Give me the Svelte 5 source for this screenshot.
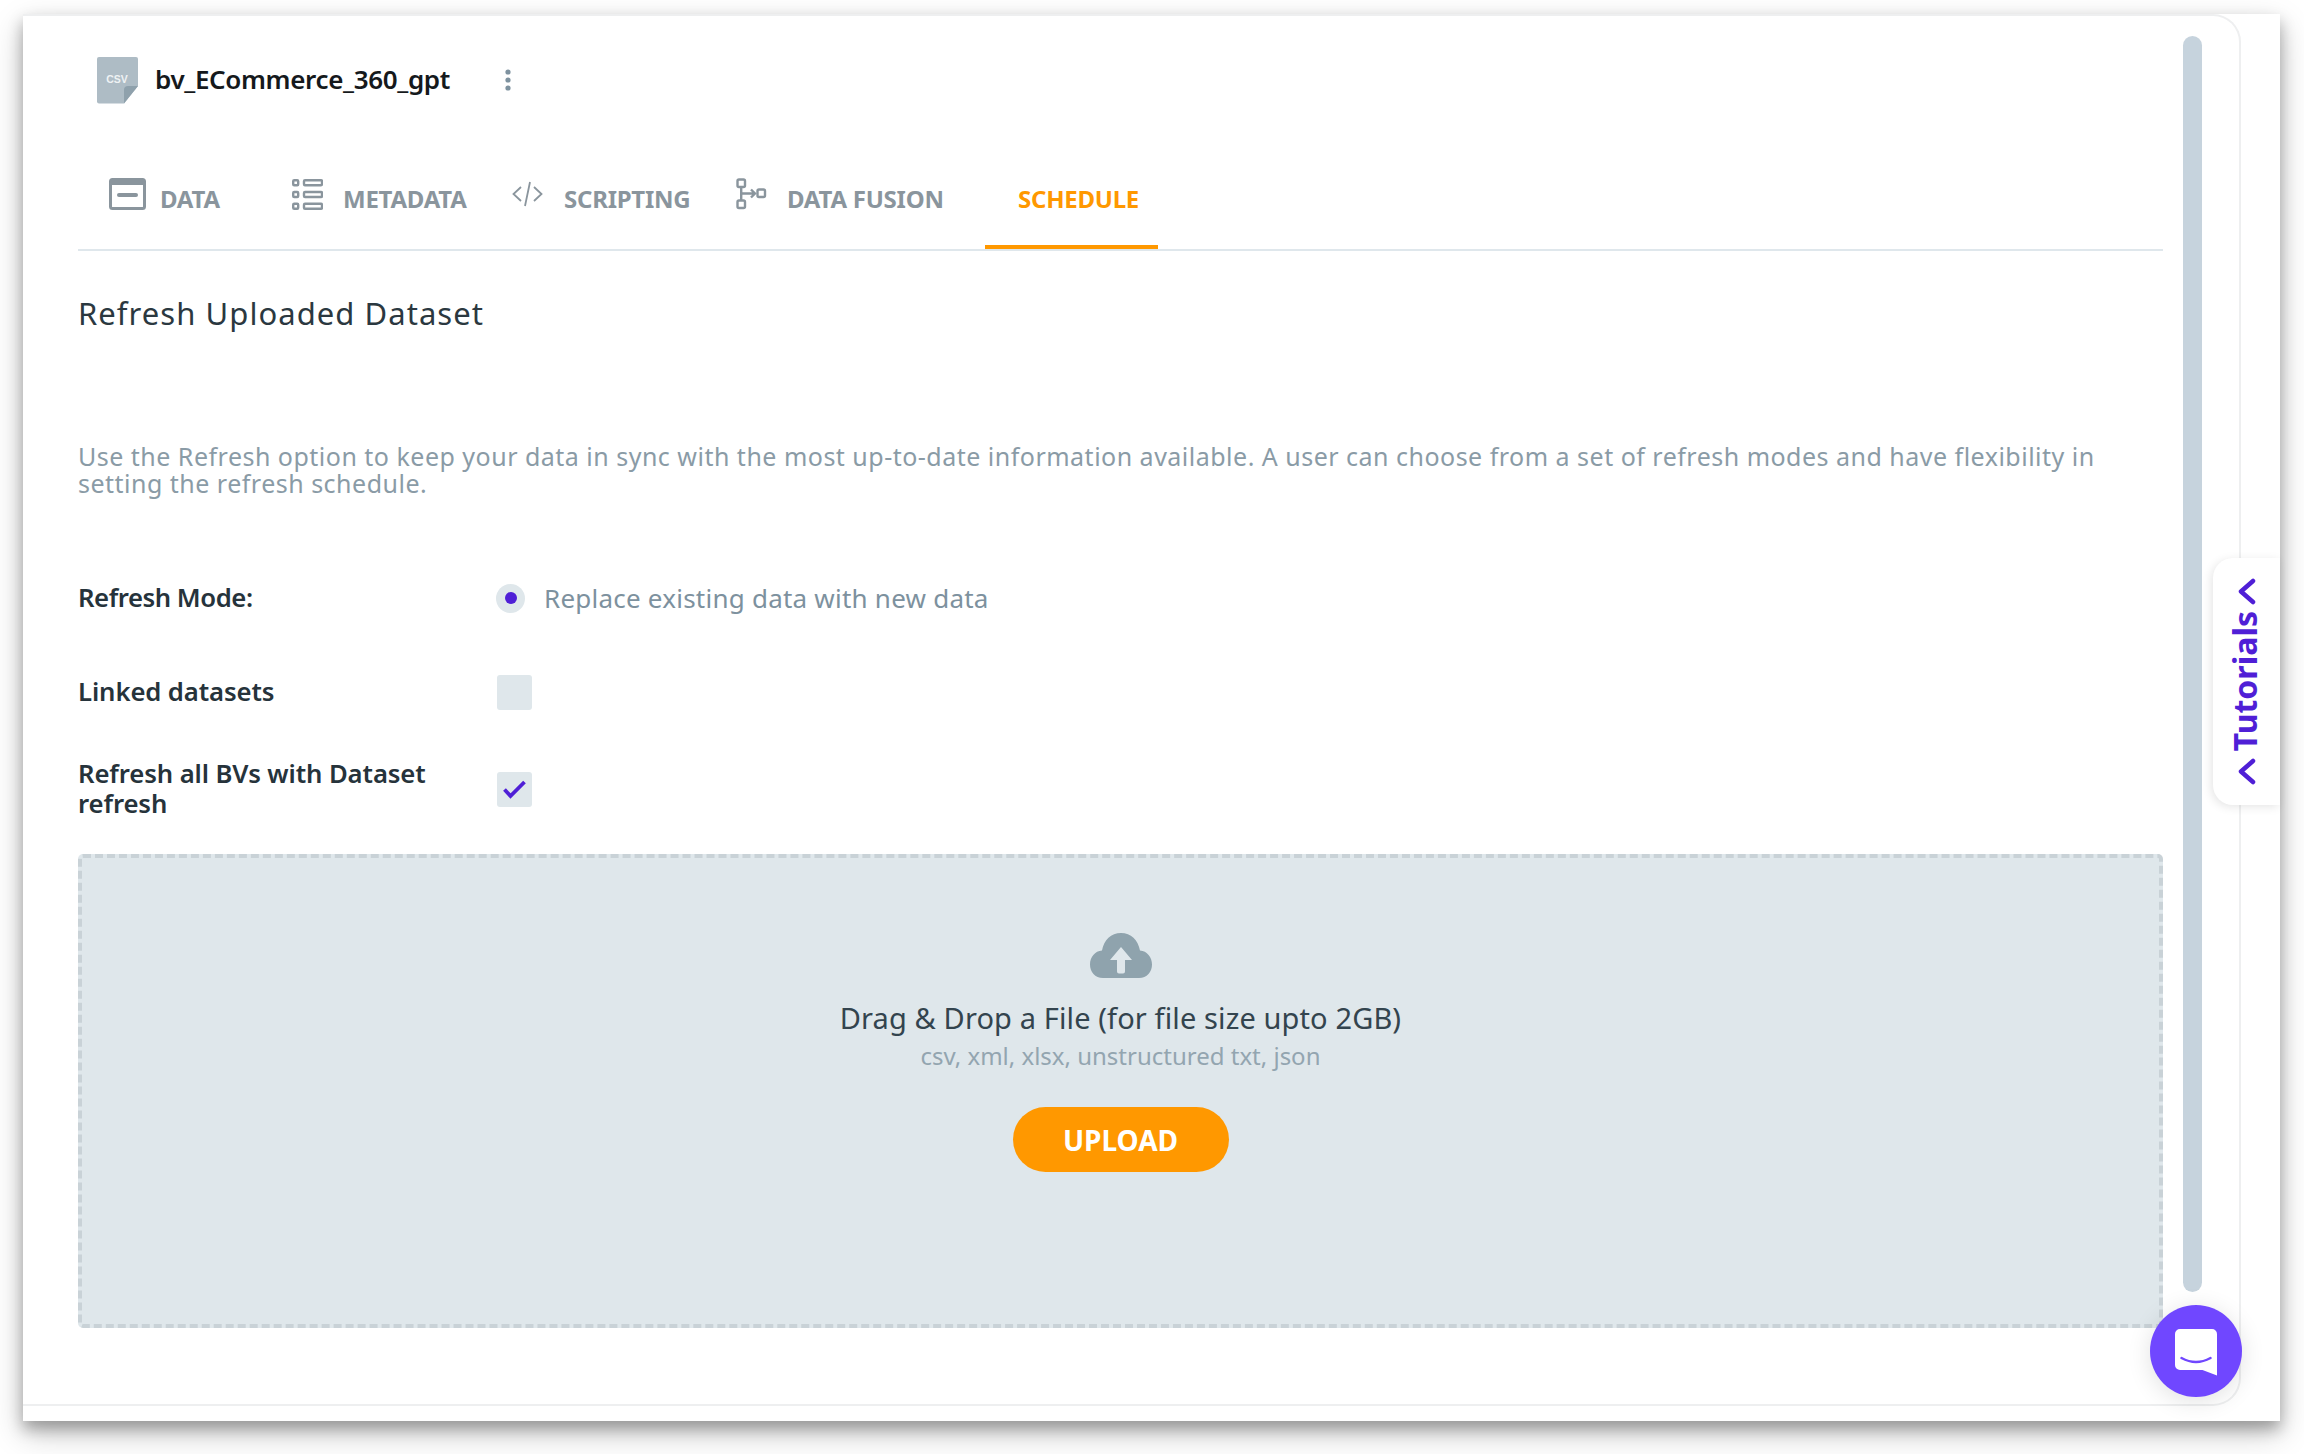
<script>
  const tabs = [
    { label: 'DATA', icon: 'data' },
    { label: 'METADATA', icon: 'meta' },
    { label: 'SCRIPTING', icon: 'code' },
    { label: 'DATA FUSION', icon: 'fusion' },
    { label: 'SCHEDULE', icon: 'sched', active: true }
  ];
</script>

<div class="page">
  <div class="window">
    <div class="panel">
      <main class="content">
        <header class="title-row">
          <svg class="csv" width="41" height="47" viewBox="0 0 41 47">
            <path d="M2 0H39a2 2 0 0 1 2 2V29L27 46.500H2a2 2 0 0 1-2-2V2a2 2 0 0 1 2-2Z" fill="#aebcc5" />
            <path d="M41 29 27 46.500V33a4 4 0 0 1 4-4Z" fill="#8fa1ac" />
            <text x="20" y="26" text-anchor="middle" class="csv-text">CSV</text>
          </svg>
          <h1>bv_ECommerce_360_gpt</h1>
          <svg class="kebab" width="8" height="24" viewBox="0 0 8 24" fill="#7e929f">
            <circle cx="4" cy="4" r="2.600" /><circle cx="4" cy="12" r="2.600" /><circle cx="4" cy="20" r="2.600" />
          </svg>
        </header>

        <nav class="tabs">
          {#each tabs as t}
            <div class="tab {t.icon}" class:active={t.active}>
              {#if t.icon === 'data'}
                <svg width="37" height="32" viewBox="0 0 37 32">
                  <rect x="1.500" y="1.500" width="34" height="29" rx="2" fill="none" stroke="#8a959d" stroke-width="3" />
                  <rect x="1" y="1" width="35" height="6" fill="#8a959d" />
                  <rect x="8" y="15" width="21" height="4" rx="2" fill="#8a959d" />
                </svg>
              {:else if t.icon === 'meta'}
                <svg width="31" height="31" viewBox="0 0 31 31" fill="none" stroke="#8a959d" stroke-width="2.400">
                  <rect x="1.200" y="1.200" width="5" height="5" rx="1" /><rect x="12" y="1.200" width="18" height="5" rx="1" />
                  <rect x="1.200" y="13" width="5" height="5" rx="1" /><rect x="12" y="13" width="18" height="5" rx="1" />
                  <rect x="1.200" y="24.800" width="5" height="5" rx="1" /><rect x="12" y="24.800" width="18" height="5" rx="1" />
                </svg>
              {:else if t.icon === 'code'}
                <svg width="31" height="26" viewBox="0 0 31 26" fill="none" stroke="#8a959d" stroke-width="1.800">
                  <path d="M9 6 1.500 13 9 20M22 6l7.500 7L22 20M18 1 13 25" />
                </svg>
              {:else if t.icon === 'fusion'}
                <svg width="31" height="32" viewBox="0 0 31 32" fill="none" stroke="#8a959d" stroke-width="2.400">
                  <rect x="1.500" y="1.500" width="7.500" height="7.500" rx="1.500" /><rect x="1.500" y="22.500" width="7.500" height="7.500" rx="1.500" /><rect x="21.500" y="11.500" width="7.500" height="7.500" rx="1.500" />
                  <path d="M5.200 9V22.500M5.200 15.500H19M15 11.500l4 4-4 4" />
                </svg>
              {/if}
              <span>{t.label}</span>
            </div>
          {/each}
        </nav>

        <h2>Refresh Uploaded Dataset</h2>
        <p class="intro">Use the Refresh option to keep your data in sync with the most up-to-date information available. A user can choose from a set of refresh modes and have flexibility in setting the refresh schedule.</p>

        <div class="field mode">
          <div class="label">Refresh Mode:</div>
          <div class="radio"><i></i></div>
          <span class="radio-text">Replace existing data with new data</span>
        </div>
        <div class="field linked">
          <div class="label">Linked datasets</div>
          <div class="check"></div>
        </div>
        <div class="field all">
          <div class="label">Refresh all BVs with Dataset refresh</div>
          <div class="check">
            <svg width="23" height="19" viewBox="0 0 23 19" fill="none" stroke="#4f1fd6" stroke-width="3.800"><path d="M1.500 9.500l6 6.500L21.500 2" /></svg>
          </div>
        </div>

        <section class="drop">
          <svg class="cloud" width="62" height="45" viewBox="0 0 62 45">
            <path d="M13 45C5 45 0 39 0 31.500 0 24 5 18 12 17.500 14 7 21 0 31 0s17 7 19 17.500C57 18 62 24 62 31.500 62 39 57 45 49 45Z" fill="#8fa3ad" />
            <path d="M31 14 42 27H35V38.500a2 2 0 0 1-2 2H29a2 2 0 0 1-2-2V27H20Z" fill="#dfe7eb" />
          </svg>
          <div class="drop-title">Drag &amp; Drop a File (for file size upto 2GB)</div>
          <div class="drop-sub">csv, xml, xlsx, unstructured txt, json</div>
          <button class="upload">UPLOAD</button>
        </section>
      </main>
      <div class="scrollbar"></div>
    </div>

    <aside class="tutorials">
      <svg width="20" height="27" viewBox="0 0 20 27" fill="none" stroke="#4f1fd6" stroke-width="4.500" stroke-linecap="round" stroke-linejoin="round"><path d="M16 3 4 13.500 16 24" /></svg>
      <span>Tutorials</span>
      <svg width="20" height="27" viewBox="0 0 20 27" fill="none" stroke="#4f1fd6" stroke-width="4.500" stroke-linecap="round" stroke-linejoin="round"><path d="M16 3 4 13.500 16 24" /></svg>
    </aside>

    <div class="chat">
      <svg width="42" height="47" viewBox="0 0 42 47">
        <path d="M5 0H37a5 5 0 0 1 5 5V46.500L27.500 41H5a5 5 0 0 1-5-5V5a5 5 0 0 1 5-5Z" fill="#fff" />
        <path d="M6.500 29Q21 37 35.500 29" fill="none" stroke="#7047ff" stroke-width="2.500" stroke-linecap="round" />
      </svg>
    </div>
  </div>
</div>

<style>
  :global(body) { margin: 0; background: #fff; }
  .page {
    width: 2304px; height: 1454px; box-sizing: border-box;
    padding: 14px 24px 33px 23px;
    font-family: "Noto Sans", "Open Sans", sans-serif;
    overflow: hidden;
  }
  .window {
    position: relative; height: 100%; background: #fff;
    box-shadow: 0 8px 14px rgba(0,0,0,.28), 0 12px 30px rgba(0,0,0,.22);
  }
  .panel {
    width: 2218px; height: 1392px; box-sizing: border-box;
    border: 2px solid #eeeff0; border-left: 0;
    border-radius: 0 28px 28px 0;
    display: flex; background: #fff;
  }
  .content { width: 2140px; box-sizing: border-box; padding-left: 55px; flex: none; }
  .scrollbar { width: 19px; margin: 20px 0 0 20px; height: 1256px; background: #c6d3dd; border-radius: 10px; }

  .title-row { display: flex; align-items: center; height: 47px; margin: 41px 0 0 19px; }
  h1 { margin: -3px 0 0 17px; font-size: 26px; font-weight: 600; color: #15191c; letter-spacing: -.35px; width: 349px; }
  .csv-text { font: 700 10.500px "Liberation Sans", sans-serif; fill: #eef2f4; }
  .kebab { display: block; margin-top: -1px; }

  .tabs { display: flex; align-items: flex-start; width: 2085px; height: 102px; margin-top: 43px; border-bottom: 2px solid #dfe7ec; }
  .tab { display: flex; align-items: center; height: 102px; box-sizing: border-box; color: #8a959d; font-size: 24px; font-weight: 700; letter-spacing: -.25px; }
  .tab svg { margin-top: -8px; }
  .tab span { margin-top: 0; }
  .tab.data { margin-left: 31px; width: 183px; gap: 14px; }
  .tab.meta { width: 220px; gap: 20px; }
  .tab.code { width: 224px; gap: 21px; }
  .tab.fusion { width: 249px; gap: 20px; }
  .tab.active { width: 173px; padding-left: 33px; color: #ff9800; border-bottom: 4px solid #ff9800; }
  .tab.active span { margin-top: 4px; }

  h2 { margin: 42px 0 0; font-size: 31px; line-height: 40px; font-weight: 400; color: #2b3840; letter-spacing: 1.050px; }
  .intro { margin: 110px 0 0; font-size: 25px; line-height: 27px; color: #8a9ba6; width: 2040px; letter-spacing: .49px; }

  .field { display: flex; align-items: center; color: #26333b; }
  .label { width: 418px; flex: none; font-size: 25.700px; line-height: 30px; font-weight: 600; color: #26333b; letter-spacing: -.1px; }
  .mode .label { letter-spacing: -.45px; }
  .mode { margin-top: 83px; height: 36px; }
  .linked { margin-top: 58px; height: 36px; }
  .all { margin-top: 48px; height: 62px; }
  .all .label { width: 382px; margin-right: 36px; }
  .radio { width: 29px; height: 29px; border-radius: 50%; background: #dfe7eb; display: grid; place-items: center; }
  .radio i { width: 12px; height: 12px; border-radius: 50%; background: #4f1fd6; display: block; }
  .radio-text { margin-left: 19px; font-size: 26px; letter-spacing: .23px; color: #7d919e; }
  .check { width: 35px; height: 35px; margin-left: 1px; border-radius: 3px; background: #dfe7eb; display: grid; place-items: center; }

  .drop {
    width: 2085px; height: 474px; box-sizing: border-box; margin-top: 34px;
    border: 4px dashed #c9d2d7; border-radius: 5px; background: #dfe7eb;
    display: flex; flex-direction: column; align-items: center; padding-top: 75px;
  }
  .cloud { display: block; }
  .drop-title { margin-top: 20px; font-size: 29px; line-height: 40px; letter-spacing: .12px; color: #33444e; }
  .drop-sub { font-size: 24px; line-height: 36px; color: #93a5b0; }
  .upload {
    margin-top: 33px; width: 216px; height: 65px; border: 0; border-radius: 33px;
    background: #ff9800; color: #fff; font: 700 28px "Noto Sans", sans-serif;
  }

  .tutorials {
    position: absolute; right: 0; top: 544px; width: 67px; height: 247px; box-sizing: border-box;
    background: #fff; border-radius: 20px 0 0 20px; box-shadow: -2px 2px 10px rgba(0,0,0,.1);
    display: flex; flex-direction: column; align-items: center; justify-content: center; gap: 6px;
    color: #4f1fd6; font-size: 32px; font-weight: 700;
  }
  .tutorials span { writing-mode: vertical-rl; transform: rotate(180deg); line-height: 34px; margin-right: 4px; }
  .tutorials svg { display: block; flex: none; }
  .chat {
    position: absolute; left: 2127px; top: 1291px; width: 92px; height: 92px; border-radius: 50%;
    background: #7047ff; display: grid; place-items: center;
    box-shadow: 0 4px 24px rgba(0,0,0,.12);
  }
  .chat svg { margin-top: 3px; }
</style>
